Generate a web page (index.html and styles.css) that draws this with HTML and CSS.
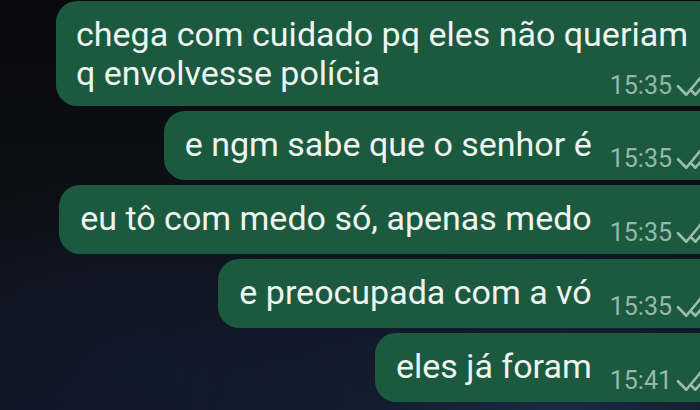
FILE: index.html
```html
<!DOCTYPE html>
<html lang="pt-BR">

<head>
    <meta charset="UTF-8">
    <meta name="viewport" content="width=device-width, initial-scale=1.0">
    <title>Conversa</title>
    <link rel="stylesheet" href="styles.css">
</head>

<body>
    <div class="chat">
        <div class="bubble bubble-multi">
            <span class="text">chega com cuidado pq eles não queriam<br>q envolvesse polícia</span>
            <span class="meta">15:35
                <svg class="ticks" viewBox="0 0 16 11"><polyline points="0.8,5.6 4.3,9.2 10.8,1.4"/><polyline points="6.6,7.6 8.2,9.2 14.8,1.4"/></svg>
            </span>
        </div>
        <div class="bubble">
            <span class="text">e ngm sabe que o senhor é</span>
            <span class="meta">15:35
                <svg class="ticks" viewBox="0 0 16 11"><polyline points="0.8,5.6 4.3,9.2 10.8,1.4"/><polyline points="6.6,7.6 8.2,9.2 14.8,1.4"/></svg>
            </span>
        </div>
        <div class="bubble">
            <span class="text">eu tô com medo só, apenas medo</span>
            <span class="meta">15:35
                <svg class="ticks" viewBox="0 0 16 11"><polyline points="0.8,5.6 4.3,9.2 10.8,1.4"/><polyline points="6.6,7.6 8.2,9.2 14.8,1.4"/></svg>
            </span>
        </div>
        <div class="bubble">
            <span class="text">e preocupada com a vó</span>
            <span class="meta">15:35
                <svg class="ticks" viewBox="0 0 16 11"><polyline points="0.8,5.6 4.3,9.2 10.8,1.4"/><polyline points="6.6,7.6 8.2,9.2 14.8,1.4"/></svg>
            </span>
        </div>
        <div class="bubble">
            <span class="text">eles já foram</span>
            <span class="meta">15:41
                <svg class="ticks" viewBox="0 0 16 11"><polyline points="0.8,5.6 4.3,9.2 10.8,1.4"/><polyline points="6.6,7.6 8.2,9.2 14.8,1.4"/></svg>
            </span>
        </div>
    </div>
</body>

</html>
```

FILE: styles.css
```css
body {
    margin: 0;
    width: 700px;
    height: 410px;
    overflow: hidden;
    font-family: Roboto, "Noto Sans", Arial, sans-serif;
    background:
        radial-gradient(ellipse 420px 260px at 560px 430px, #1b2c44 0%, rgba(20, 32, 52, 0.6) 45%, rgba(12, 14, 22, 0) 100%),
        radial-gradient(ellipse 300px 200px at 150px 370px, #111a2a 0%, rgba(12, 14, 22, 0) 100%),
        linear-gradient(180deg, #0a0a0d 0%, #0d0f16 55%, #101624 100%);
}

.chat {
    width: 724px;
    display: flex;
    flex-direction: column;
    align-items: flex-end;
    gap: 5px;
    padding-top: 1px;
}

.bubble {
    display: flex;
    align-items: flex-start;
    background: #1c5a40;
    border-radius: 21px;
    padding: 14px 10px 6px 21px;
}

.bubble-multi {
    flex-direction: column;
    padding: 14px 36px 5px 20px;
}

.text {
    color: #eef4ef;
    font-size: 34px;
    line-height: 39px;
    white-space: nowrap;
}

.meta {
    display: flex;
    align-items: center;
    gap: 4px;
    margin-top: 18px;
    margin-left: 18px;
    color: #97b8a6;
    font-size: 25px;
    line-height: 31px;
}

.bubble-multi .meta {
    align-self: flex-end;
    margin-top: -23px;
    margin-right: -26px;
}

.ticks {
    width: 38px;
    height: 26px;
    fill: none;
    stroke: #9dbdab;
    stroke-width: 1.1;
    stroke-linecap: round;
    stroke-linejoin: round;
}
```
